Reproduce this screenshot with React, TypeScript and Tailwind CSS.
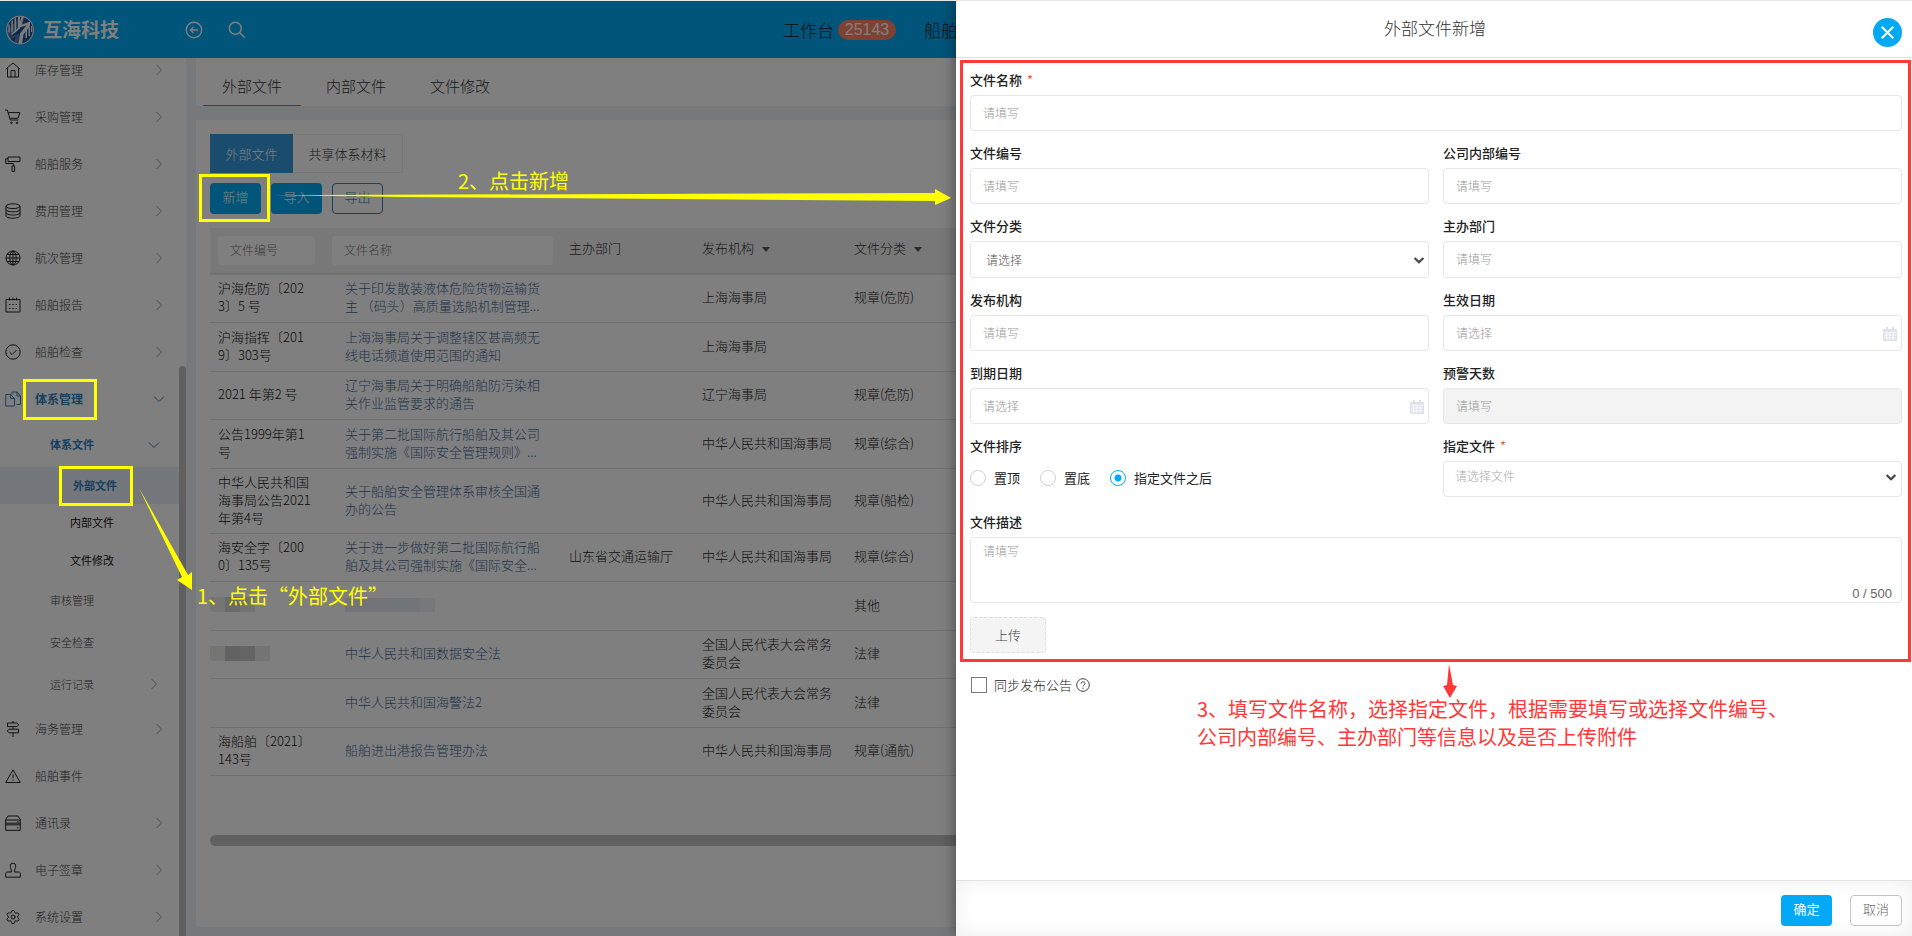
import React from "react";
import { Settings } from "lucide-react";

function MenuIcon({ name }: { name: string }) {
  if (name === "gear") return <Settings size={16} strokeWidth={1.5} aria-hidden />;
  const shapes: Record<string, React.ReactNode> = {
    home: <path d="M.8 7.2 8 1l7.2 6.2M2.5 6.2V15h11V6.2M6 15V8.5h4V15" />,
    cart: (
      <>
        <path d="M0 1h2.3l3 10h8M3.3 3.6h11.5l-1.7 5.7H5" />
        <circle cx="6.4" cy="13.8" r=".8" />
        <circle cx="12" cy="13.8" r=".8" />
      </>
    ),
    roller: <path d="M3 1h12v4.5H3zM3 2.8H.7v4.7h7.6V10M7 10h2.6v5.4H7z" />,
    coins: (
      <>
        <ellipse cx="8" cy="3.2" rx="7" ry="2.4" />
        <path d="M1 3.2v9.6c0 1.4 3.1 2.4 7 2.4s7-1 7-2.4V3.2M1 6.4c0 1.4 3.1 2.4 7 2.4s7-1 7-2.4M1 9.6c0 1.4 3.1 2.4 7 2.4s7-1 7-2.4" />
      </>
    ),
    globe: (
      <>
        <circle cx="8" cy="8" r="7" />
        <ellipse cx="8" cy="8" rx="3.2" ry="7" />
        <path d="M8 1v14M1 8h14M2 4.5h12M2 11.5h12" />
      </>
    ),
    calendar: (
      <>
        <path d="M1 2.5h14V15H1zM4.5.5v3M8 .5v3M11.5.5v3" />
        <path d="M4 7.5h1.4M7.3 7.5h1.4M10.6 7.5H12M4 11.5h1.4M7.3 11.5h1.4M10.6 11.5H12" />
      </>
    ),
    check: (
      <>
        <circle cx="8" cy="8" r="7.2" />
        <path d="m4.5 8 2.6 2.5 4.5-4.5" />
      </>
    ),
    files: <path d="M.7 3.5h5l3.8 4V15H.7zM5.7 3.5v4h3.8M7 3.5V1h5l3.5 4v8.5h-4M12 1v4h3.5" />,
    sign: <path d="M8 0v2M2.5 2H12l1.7 1.8L12 5.6H2.5zM8 5.6v2.6M13.5 8.2H4L2.3 10 4 11.8h9.5zM8 11.8V16" />,
    warn: <path d="M8 1.8 15.3 14.5H.7zM8 6.3v4M8 11.6v1.2" />,
    drive: <path d="M3 1h10l2.3 3.5v10.8H.7V4.5zM.7 5h14.6M.7 8.2h14.6M.7 9.8h14.6M12 6.8h1.5M12 12.8h1.5" />,
    stamp: <path d="M6.5 10c0-3-1.3-4-1.3-6a2.8 2.8 0 0 1 5.6 0c0 2-1.3 3-1.3 6h4.2c.9 0 1.600.7 1.600 1.6v3.600H.7v-3.600C.7 10.700 1.400 10 2.300 10z" />,
  };
  return (
    <svg width="16" height="16" viewBox="0 0 16 16" fill="none" stroke="currentColor" strokeWidth="1" aria-hidden>
      {shapes[name]}
    </svg>
  );
}

function Chevron({ down = false, heavy = false }: { down?: boolean; heavy?: boolean }) {
  return (
    <svg width="12" height="12" viewBox="0 0 12 12" fill="none" stroke="currentColor" strokeWidth={heavy ? 2.2 : 1} aria-hidden>
      <path d={heavy ? "m1.6 4 4.4 4.2L10.4 4" : down ? "m1 3.5 5 5 5-5" : "m3.5 1 5 5-5 5"} />
    </svg>
  );
}

type Item = { label: string; icon: string; arrow?: boolean };

const topItems: Item[] = [
  { label: "库存管理", icon: "home", arrow: true },
  { label: "采购管理", icon: "cart", arrow: true },
  { label: "船舶服务", icon: "roller", arrow: true },
  { label: "费用管理", icon: "coins", arrow: true },
  { label: "航次管理", icon: "globe", arrow: true },
  { label: "船舶报告", icon: "calendar", arrow: true },
  { label: "船舶检查", icon: "check", arrow: true },
];

const bottomItems: Item[] = [
  { label: "海务管理", icon: "sign", arrow: true },
  { label: "船舶事件", icon: "warn" },
  { label: "通讯录", icon: "drive", arrow: true },
  { label: "电子签章", icon: "stamp", arrow: true },
  { label: "系统设置", icon: "gear", arrow: true },
];

function MenuRow({ item }: { item: Item }) {
  return (
    <a href="#" className="flex h-[47px] shrink-0 items-center pr-[21px] pl-[5px] text-xs font-light text-[#444]">
      <span className="w-[30px] text-[#222]">
        <MenuIcon name={item.icon} />
      </span>
      <span className="flex-1">{item.label}</span>
      {item.arrow && (
        <span className="text-[#999]">
          <Chevron />
        </span>
      )}
    </a>
  );
}

function Sidebar() {
  return (
    <nav className="relative w-[186px] shrink-0 overflow-hidden bg-white">
      <div className="-mt-3 flex flex-col">
        {topItems.map((item) => (
          <MenuRow key={item.label} item={item} />
        ))}
        <a href="#" className="flex h-[47px] shrink-0 items-center pr-[21px] pl-[5px] text-xs font-bold text-[#2f80bf]">
          <span className="w-[30px]">
            <MenuIcon name="files" />
          </span>
          <span className="flex-1">体系管理</span>
          <Chevron down />
        </a>
        <a href="#" className="flex h-[45px] shrink-0 items-center pr-[26px] pl-[50px] text-[11px] font-bold text-[#2f80bf]">
          <span className="flex-1">体系文件</span>
          <Chevron down />
        </a>
        <a href="#" className="flex h-[37px] shrink-0 items-center border-l-[3px] border-transparent bg-[#e8eff9] pl-[70px] text-[11px] font-bold text-[#2f80bf]">
          外部文件
        </a>
        <a href="#" className="flex h-[37px] shrink-0 items-center pl-[70px] text-[11px] text-[#111]">内部文件</a>
        <a href="#" className="flex h-[38px] shrink-0 items-center pl-[70px] text-[11px] text-[#111]">文件修改</a>
        <a href="#" className="flex h-[42px] shrink-0 items-center pl-[50px] text-[11px] font-light text-[#444]">审核管理</a>
        <a href="#" className="flex h-[42px] shrink-0 items-center pl-[50px] text-[11px] font-light text-[#444]">安全检查</a>
        <a href="#" className="flex h-[42px] shrink-0 items-center pr-[26px] pl-[50px] text-[11px] font-light text-[#444]">
          <span className="flex-1">运行记录</span>
          <span className="text-[#999]">
            <Chevron />
          </span>
        </a>
        {bottomItems.map((item) => (
          <MenuRow key={item.label} item={item} />
        ))}
      </div>
      <div className="absolute top-[308px] right-0 bottom-0 w-[7px] rounded-t bg-[#c1c1c1]" />
    </nav>
  );
}

function Logo() {
  return (
    <svg width="28" height="30" viewBox="0 0 28 30" aria-hidden>
      <ellipse cx="14" cy="15" rx="14" ry="14.5" fill="#1d4f98" />
      <ellipse cx="14" cy="15" rx="13.4" ry="13.900" fill="none" stroke="#e8edf5" strokeWidth="1.200" />
      <path
        d="M15.500 1 12.500 13l8-2.800L14 18.500l-1.500 10.500h3.500l1.500-9.500 6.500-8.500V6.500l-8 3L18 1z"
        fill="#f4f6fa"
      />
      <path d="M14.500 1 12 15 4 21.500l9-2.500V29L8 27l1.500-5L2 25 .5 17z" fill="#f4f6fa" opacity=".25" />
      <path d="M12 1.500h2v12L6 20l-1-1 7-6zM8.500 3h1.600v12l-1.600 1zM5.300 5.500h1.500v11l-1.500 1zM2.300 9.500h1.400v8H2.300zM19.500 13h1.500v10h-1.500zM22.500 12h1.500v9h-1.500zM25 11h1.200v6H25z" fill="#f4f6fa" />
    </svg>
  );
}

function Header() {
  return (
    <header className="flex h-[57px] shrink-0 items-center bg-[#03a9f4] pl-[6px] text-white">
      <Logo />
      <h1 className="ml-[9px] w-[138px] text-[19px] font-bold">互海科技</h1>
      <button type="button" aria-label="返回" className="mr-[25px] ml-1">
        <svg width="18" height="18" viewBox="0 0 18 18" fill="none" stroke="currentColor" strokeWidth="1.4" aria-hidden>
          <circle cx="9" cy="9" r="7.7" />
          <path d="M13 9H5.5M8.5 6l-3 3 3 3" />
        </svg>
      </button>
      <button type="button" aria-label="搜索">
        <svg width="18" height="18" viewBox="0 0 18 18" fill="none" stroke="currentColor" strokeWidth="1.5" aria-hidden>
          <circle cx="7.3" cy="7.3" r="6" />
          <path d="m11.8 11.8 5 5" />
        </svg>
      </button>
      <div className="ml-auto flex w-[1129px] shrink-0 items-center text-[17px] text-[#222]">
        <a href="#" className="whitespace-nowrap font-light">工作台</a>
        <span className="mr-7 ml-1 flex h-5 w-[58px] items-center justify-center rounded-full bg-[#ff8364] font-['Liberation_Sans'] text-base text-white">
          25143
        </span>
        <a href="#" className="whitespace-nowrap font-light">船舶</a>
      </div>
    </header>
  );
}

type Row = {
  code?: string;
  name?: string;
  dept?: string;
  org?: string;
  kind?: string;
  tall?: boolean;
  maskedCode?: "short" | "long";
  maskedName?: boolean;
};

const rows: Row[] = [
  { code: "沪海危防〔2023〕5 号", name: "关于印发散装液体危险货物运输货主 （码头）高质量选船机制管理...", org: "上海海事局", kind: "规章(危防)" },
  { code: "沪海指挥〔2019〕303号", name: "上海海事局关于调整辖区甚高频无线电话频道使用范围的通知", org: "上海海事局", tall: true },
  { code: "2021 年第2 号", name: "辽宁海事局关于明确船舶防污染相关作业监管要求的通告", org: "辽宁海事局", kind: "规章(危防)" },
  { code: "公告1999年第1号", name: "关于第二批国际航行船舶及其公司强制实施《国际安全管理规则》...", org: "中华人民共和国海事局", kind: "规章(综合)", tall: true },
  { code: "中华人民共和国海事局公告2021年第4号", name: "关于船舶安全管理体系审核全国通办的公告", org: "中华人民共和国海事局", kind: "规章(船检)" },
  { code: "海安全字〔2000〕135号", name: "关于进一步做好第二批国际航行船舶及其公司强制实施《国际安全...", dept: "山东省交通运输厅", org: "中华人民共和国海事局", kind: "规章(综合)" },
  { maskedCode: "short", maskedName: true, kind: "其他", tall: true },
  { maskedCode: "long", name: "中华人民共和国数据安全法", org: "全国人民代表大会常务委员会", kind: "法律" },
  { name: "中华人民共和国海警法2", org: "全国人民代表大会常务委员会", kind: "法律", tall: true },
  { code: "海船舶〔2021〕143号", name: "船舶进出港报告管理办法", org: "中华人民共和国海事局", kind: "规章(通航)" },
];

function Caret() {
  return (
    <svg width="8" height="5" viewBox="0 0 8 5" className="ml-2 inline-block align-middle" aria-hidden>
      <path d="M0 0h8L4 5z" fill="#555" />
    </svg>
  );
}

function FileTable() {
  return (
    <table className="w-[1240px] table-fixed border-collapse text-[13px] leading-[18px] font-light text-[#222]">
      <colgroup>
        <col className="w-[114px]" />
        <col className="w-[237px]" />
        <col className="w-[133px]" />
        <col className="w-[152px]" />
        <col className="w-[150px]" />
        <col />
      </colgroup>
      <thead>
        <tr className="h-[46px] border-b-2 border-[#e4e4e4] bg-[#f0f0f0] text-left text-[#333]">
          <th className="pl-2 font-light">
            <input aria-label="文件编号" placeholder="文件编号" className="h-[29px] w-[97px] rounded bg-white px-3 pb-[2px] text-xs placeholder:text-[#777]" />
          </th>
          <th className="pl-2 font-light">
            <input aria-label="文件名称" placeholder="文件名称" className="h-[29px] w-[221px] rounded bg-white px-3 pb-[2px] text-xs placeholder:text-[#777]" />
          </th>
          <th className="pb-[5px] pl-2 font-light">主办部门</th>
          <th className="pb-[5px] pl-2 font-light">
            发布机构
            <Caret />
          </th>
          <th className="pb-[5px] pl-2 font-light">
            文件分类
            <Caret />
          </th>
          <th />
        </tr>
      </thead>
      <tbody>
        {rows.map((row, i) => (
          <tr key={i} className={row.tall ? "h-[49px] border-b border-[#e2e2e2]" : "h-[48px] border-b border-[#e2e2e2]"}>
            <td className="pt-1 pb-[6px] pl-2 break-all text-[#111]">
              {row.code && <div className="w-[97px]">{row.code}</div>}
              {row.maskedCode && (
                <div className="-ml-2 flex h-[15px]">
                  <span className="w-[15px] rounded-bl bg-[#ebebe7]" />
                  <span className={row.maskedCode === "long" ? "w-[15px] bg-[#c4c4c4]" : "w-[15px] bg-[#d4d4d4]"} />
                  <span className={row.maskedCode === "long" ? "w-[15px] bg-[#c8c8c8]" : "w-[15px] bg-[#e2e4e4]"} />
                  {row.maskedCode === "long" && <span className="w-[15px] bg-[#e8e8e8]" />}
                </div>
              )}
            </td>
            <td className="pb-[2px] pl-[21px]">
              {row.name && (
                <a href="#" className="block w-[205px] text-[#3f6797]">
                  {row.name}
                </a>
              )}
              {row.maskedName && (
                <div className="flex h-[14px]">
                  <span className="w-[45px] bg-[#e4e9f4]" />
                  <span className="w-[30px] bg-[#e4eaf0]" />
                  <span className="w-[15px] bg-[#eef1f5]" />
                </div>
              )}
            </td>
            <td className="pb-[2px] pl-2">{row.dept}</td>
            <td className="pr-2 pb-[2px] pl-2">{row.org}</td>
            <td className="pb-[2px] pl-2">{row.kind}</td>
            <td />
          </tr>
        ))}
      </tbody>
    </table>
  );
}

function Main() {
  return (
    <main className="flex min-w-0 flex-1 flex-col overflow-hidden bg-[#eff1f5] pb-[9px] pl-[10px]">
      <div className="flex h-[48px] shrink-0 gap-[6px] bg-white pl-[7px] text-[15px] font-light text-[#333]">
        <button type="button" className="w-[98px] border-b border-[#03a9f4] pt-[10px] pb-px">外部文件</button>
        <button type="button" className="w-[98px] pt-[10px] pb-px">内部文件</button>
        <button type="button" className="w-[98px] pt-[10px] pb-px">文件修改</button>
      </div>
      <section className="mt-[14px] flex flex-1 flex-col overflow-hidden bg-white pt-[14px] pl-[14px]">
        <div className="flex h-[39px] shrink-0 text-[13px] font-light">
          <button type="button" className="w-[83px] bg-[#3598dc] text-white">外部文件</button>
          <button type="button" className="w-[110px] border border-l-0 border-[#eee] text-[#333]">共享体系材料</button>
        </div>
        <div className="mt-[10px] flex h-[31px] shrink-0 gap-[10px] text-[13px] font-light">
          <button type="button" className="w-[51px] rounded bg-[#03a9f4] pb-[3px] text-white">新增</button>
          <button type="button" className="w-[51px] rounded bg-[#03a9f4] pb-[3px] text-white">导入</button>
          <button type="button" className="w-[51px] rounded border border-[#2f80bf] pb-[3px] text-[#2f80bf]">导出</button>
        </div>
        <div className="mt-[14px]">
          <FileTable />
        </div>
        <div className="mt-[59px] h-[11px] shrink-0 rounded-l-full bg-[#c1c1c1]" />
      </section>
    </main>
  );
}

function CalendarIcon() {
  return (
    <svg width="14" height="14" viewBox="0 0 14 14" className="absolute right-[5px] bottom-[10px]" aria-hidden>
      <path fill="#dde2e8" d="M1 2h12a1 1 0 0 1 1 1v10a1 1 0 0 1-1 1H1a1 1 0 0 1-1-1V3a1 1 0 0 1 1-1zM3 0h2v3H3zM9 0h2v3H9z" />
      <path stroke="#fff" strokeWidth=".8" d="M1 5.2h12M1 8h12M1 10.8h12M3.8 5v8M7 5v8M10.2 5v8" />
    </svg>
  );
}

function Field({ id, label, placeholder = "请填写", required, calendar, disabled, tall }: {
  id: string;
  label: string;
  placeholder?: string;
  required?: boolean;
  calendar?: boolean;
  disabled?: boolean;
  tall?: boolean;
}) {
  return (
    <div className="relative flex flex-col gap-[6px]">
      <FieldLabel id={id} label={label} required={required} />
      <input
        id={id}
        placeholder={placeholder}
        disabled={disabled}
        className={
          tall
            ? "h-[37px] w-full rounded border border-[#e5e6e9] bg-white px-3 pb-[2px] text-xs font-light placeholder:text-[#999]"
            : "h-[36px] w-full rounded border border-[#e5e6e9] bg-white px-3 pb-[2px] text-xs font-light placeholder:text-[#999] disabled:bg-[#f3f3f3]"
        }
      />
      {calendar && <CalendarIcon />}
    </div>
  );
}

function FieldLabel({ id, label, required }: { id: string; label: string; required?: boolean }) {
  return (
    <label htmlFor={id} className="block h-[18px] text-[13px] leading-[18px] font-medium text-[#222]">
      {label}
      {required && <span className="ml-[5px] font-normal text-[#ed5b35]">*</span>}
    </label>
  );
}

function Radio({ label, checked = false }: { label: string; checked?: boolean }) {
  return (
    <label className="flex items-center gap-2">
      <input
        type="radio"
        name="order"
        defaultChecked={checked}
        className="h-4 w-4 appearance-none rounded-full border border-[#d0d0d0] bg-white checked:border-[#03a9f4] checked:bg-[radial-gradient(circle,#03a9f4_3px,transparent_4px)]"
      />
      {label}
    </label>
  );
}

function Drawer() {
  return (
    <aside role="dialog" aria-label="外部文件新增" className="absolute inset-y-0 right-0 flex w-1/2 flex-col border-t border-[#e5e5e5] bg-white shadow-[0_0_14px_rgba(0,0,0,0.45)]">
      <div className="relative flex h-[57px] shrink-0 items-center justify-center border-b border-[#e2e2e2]">
        <h2 className="pb-[3px] pl-[2px] text-[17px] font-light text-[#333]">外部文件新增</h2>
        <button type="button" aria-label="关闭" className="absolute top-[17px] right-[10px] flex h-[29px] w-[29px] items-center justify-center rounded-full bg-[#03a9f4]">
          <svg width="13" height="13" viewBox="0 0 13 13" stroke="#fff" strokeWidth="2" aria-hidden>
            <path d="m.7.7 11.6 11.6M12.3.7.7 12.3" />
          </svg>
        </button>
      </div>
      <form className="flex flex-1 flex-col pt-[2px] pr-px pl-1 text-[#222]">
        <div className="border-[3px] border-[#ff3838] pt-2 pr-[6px] pb-[6px] pl-[7px]">
          <div className="grid grid-cols-2 gap-x-[14px] gap-y-[13px]">
            <div className="col-span-2">
              <Field id="name" label="文件名称" required />
            </div>
            <Field id="code" label="文件编号" />
            <Field id="inner" label="公司内部编号" />
            <div className="relative flex flex-col gap-[6px]">
              <FieldLabel id="kind" label="文件分类" />
              <select id="kind" className="h-[37px] w-full appearance-none rounded border border-[#e5e6e9] bg-white px-[15px] text-xs font-light text-[#555]">
                <option>请选择</option>
              </select>
              <span className="pointer-events-none absolute right-1 bottom-[12px] text-[#444]">
                <Chevron heavy />
              </span>
            </div>
            <Field id="dept" label="主办部门" tall />
            <Field id="org" label="发布机构" />
            <Field id="effective" label="生效日期" placeholder="请选择" calendar />
            <Field id="expire" label="到期日期" placeholder="请选择" calendar />
            <Field id="days" label="预警天数" disabled />
            <fieldset>
              <legend className="h-[18px] text-[13px] leading-[18px] font-medium text-[#222]">文件排序</legend>
              <div className="mt-[6px] flex h-[34px] items-center gap-5 text-[13px]">
                <Radio label="置顶" />
                <Radio label="置底" />
                <Radio label="指定文件之后" checked />
              </div>
            </fieldset>
            <div className="relative flex flex-col gap-[6px]">
              <FieldLabel id="target" label="指定文件" required />
              <select id="target" className="h-[36px] w-full appearance-none rounded border border-[#e5e6e9] bg-white px-[11px] pb-[6px] text-xs font-light text-[#aaa]">
                <option>请选择文件</option>
              </select>
              <span className="pointer-events-none absolute right-[5px] bottom-[14px] text-[#444]">
                <Chevron heavy />
              </span>
            </div>
          </div>
          <div className="relative mt-4 flex flex-col gap-[6px]">
            <FieldLabel id="desc" label="文件描述" />
            <textarea id="desc" placeholder="请填写" className="block h-[66px] w-full resize-none rounded border border-[#e5e6e9] px-3 py-[5px] text-xs font-light placeholder:text-[#999]" />
            <span className="absolute right-[10px] bottom-0 font-['Liberation_Sans'] text-[13px] text-[#666]">0 / 500</span>
          </div>
          <button type="button" className="mt-[14px] block h-[36px] w-[76px] rounded border border-dashed border-[#ddd] bg-[#f4f4f4] text-[13px] font-light text-[#444]">
            上传
          </button>
        </div>
        <label className="mt-[13px] flex items-center gap-[7px] pl-[11px] text-[13px] font-light">
          <input type="checkbox" className="h-4 w-4 appearance-none border border-[#778] bg-white" />
          <span className="flex items-center gap-1">
            同步发布公告
            <svg width="14" height="14" viewBox="0 0 14 14" fill="none" stroke="#444" aria-hidden>
              <circle cx="7" cy="7" r="6.3" />
              <path d="M5.1 5.7c0-2.6 3.9-2.5 3.9-.2C9 6.9 7 7 7 8.5M7 9.7v1.2" />
            </svg>
          </span>
        </label>
      </form>
      <footer className="flex h-[56px] shrink-0 items-start justify-end gap-[18px] border-t border-[#e2e2e2] bg-white pt-[14px] pr-[10px] text-[13px] shadow-[inset_0_0_20px_#ededed]">
        <button type="button" className="h-[31px] w-[51px] rounded bg-[#03a9f4] pb-[3px] text-white">确定</button>
        <button type="button" className="h-[31px] w-[52px] rounded border border-[#c4c4c4] bg-white pb-[3px] font-light text-[#666]">取消</button>
      </footer>
    </aside>
  );
}

function Annotations() {
  return (
    <div className="pointer-events-none absolute inset-0 text-xl leading-7 whitespace-nowrap">
      <div className="absolute top-[379px] left-[23px] h-[41px] w-[74px] border-[3px] border-[#ff0]" />
      <div className="absolute top-[466px] left-[59px] h-[40px] w-[74px] border-[3px] border-[#ff0]" />
      <div className="absolute top-[174px] left-[199px] h-[48px] w-[71px] border-[3px] border-[#ff0]" />
      <svg className="absolute top-0 left-0" width="960" height="600" viewBox="0 0 960 600" fill="#ff0" aria-hidden>
        <path d="M139 488l49 87 4-3v18l-15-10 5-3z" />
        <path d="M274 195h40l621-2v-4l16 9-16 7v-4L400 197z" />
      </svg>
      <p className="absolute top-[167px] left-[458px] text-[#ff0]">2、点击新增</p>
      <p className="absolute top-[582px] left-[197px] text-[#ff0]">1、点击“外部文件”</p>
      <div className="absolute top-[664px] left-1/2 pl-[241px] text-[#ff3838]">
        <svg width="520" height="34" viewBox="0 0 520 34" className="-mb-[3px] block" fill="#ff3838" aria-hidden>
          <path d="M252 0l4 21 4 1-7 12-7-12 4-1z" />
        </svg>
        <p>
          3、填写文件名称，选择指定文件，根据需要填写或选择文件编号、
          <br />
          公司内部编号、主办部门等信息以及是否上传附件
        </p>
      </div>
    </div>
  );
}

export default function App() {
  return (
    <div className="relative flex h-screen flex-col overflow-hidden border-t border-[#e5e5e5] font-['Noto_Sans_CJK_SC',sans-serif]">
      <Header />
      <div className="flex min-h-0 flex-1">
        <Sidebar />
        <Main />
      </div>
      <div className="absolute inset-0 bg-black/50" />
      <div className="absolute inset-0 -top-px">
        <Drawer />
        <Annotations />
      </div>
    </div>
  );
}
